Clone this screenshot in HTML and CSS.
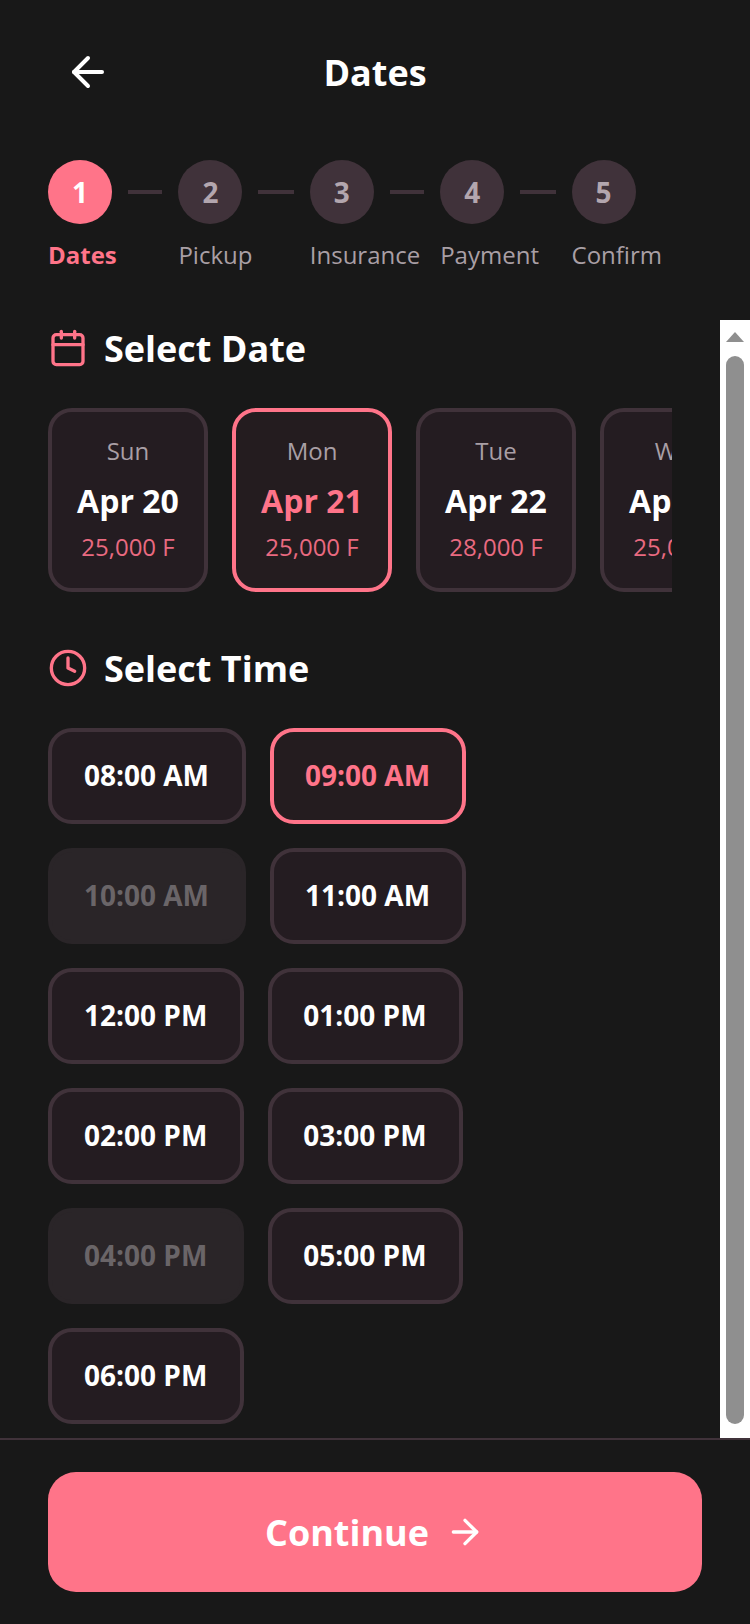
FILE: index.html
```html
<!DOCTYPE html>
<html lang="en">
<head>
<meta charset="utf-8">
<title>Dates</title>
<link rel="stylesheet" href="styles.css">
</head>
<body>
<div class="app">
  <header class="header">
    <button class="back" aria-label="Back">
      <svg class="icon-48" viewBox="0 0 24 24"><path d="M19 12H5"/><path d="M12 19l-7-7 7-7"/></svg>
    </button>
    <h1 class="title">Dates</h1>
  </header>

  <div class="steps">
    <div class="step">
      <div class="step-top"><span class="circle circle-active">1</span><span class="conn"></span></div>
      <span class="step-label step-label-active">Dates</span>
    </div>
    <div class="step step-wide">
      <div class="step-top"><span class="circle">2</span><span class="conn"></span></div>
      <span class="step-label">Pickup</span>
    </div>
    <div class="step">
      <div class="step-top"><span class="circle">3</span><span class="conn"></span></div>
      <span class="step-label">Insurance</span>
    </div>
    <div class="step step-wide">
      <div class="step-top"><span class="circle">4</span><span class="conn"></span></div>
      <span class="step-label">Payment</span>
    </div>
    <div class="step step-last">
      <div class="step-top"><span class="circle">5</span></div>
      <span class="step-label">Confirm</span>
    </div>
  </div>

  <div class="main">
    <div class="content">
      <section class="section">
        <h2 class="section-title">
          <svg class="icon-40 accent" viewBox="0 0 24 24"><path d="M8 2v4"/><path d="M16 2v4"/><rect x="3" y="4" width="18" height="18" rx="2"/><path d="M3 10h18"/></svg>
          Select Date
        </h2>
        <div class="dates">
          <div class="date-card"><span class="day">Sun</span><span class="date">Apr 20</span><span class="price">25,000 F</span></div>
          <div class="date-card date-card-on"><span class="day">Mon</span><span class="date">Apr 21</span><span class="price">25,000 F</span></div>
          <div class="date-card"><span class="day">Tue</span><span class="date">Apr 22</span><span class="price">28,000 F</span></div>
          <div class="date-card"><span class="day">Wed</span><span class="date">Apr 23</span><span class="price">25,000 F</span></div>
        </div>
      </section>

      <section class="section section-time">
        <h2 class="section-title section-title-time">
          <svg class="icon-40 accent" viewBox="0 0 24 24"><circle cx="12" cy="12" r="10"/><path d="M12 6v6l4 2"/></svg>
          Select Time
        </h2>
        <div class="times">
          <button class="time">08:00 AM</button>
          <button class="time time-on">09:00 AM</button>
          <button class="time time-off">10:00 AM</button>
          <button class="time">11:00 AM</button>
          <button class="time">12:00 PM</button>
          <button class="time">01:00 PM</button>
          <button class="time">02:00 PM</button>
          <button class="time">03:00 PM</button>
          <button class="time time-off">04:00 PM</button>
          <button class="time">05:00 PM</button>
          <button class="time">06:00 PM</button>
        </div>
      </section>
    </div>
    <div class="scrollbar">
      <span class="scroll-up"></span>
      <span class="scroll-thumb"></span>
    </div>
  </div>

  <footer class="footer">
    <button class="continue">
      Continue
      <svg class="icon-40" viewBox="0 0 24 24"><path d="M5 12h14"/><path d="M12 5l7 7-7 7"/></svg>
    </button>
  </footer>
</div>
</body>
</html>
```
FILE: styles.css
```css
* { box-sizing: border-box; }
html, body { margin: 0; padding: 0; background: #181818; }
body { font-family: "Open Sans", "Noto Sans", sans-serif; color: #fff; }
button { font-family: inherit; margin: 0; cursor: pointer; }

.app { width: 750px; height: 1624px; display: flex; flex-direction: column; overflow: hidden; }

svg { fill: none; stroke: currentColor; stroke-width: 2; stroke-linecap: round; stroke-linejoin: round; display: block; flex: none; }
.icon-48 { width: 48px; height: 48px; }
.icon-40 { width: 40px; height: 40px; }
.accent { color: #ff7489; }

.header { height: 144px; padding: 32px 48px 0; position: relative; display: flex; }
.back { width: 80px; height: 80px; padding: 0; border: 0; background: none; color: #fff; display: flex; align-items: center; justify-content: center; }
.title { position: absolute; left: 0; right: 0; top: 32px; margin: 0; text-align: center; font-size: 36px; line-height: 82px; font-weight: 700; }

.steps { display: flex; padding: 16px 48px 0; height: 176px; }
.step { width: 130.4px; display: flex; flex-direction: column; flex: none; }
.step-wide { width: 131.4px; }
.step-top { display: flex; align-items: center; }
.circle { width: 64px; height: 64px; padding-bottom: 1px; border-radius: 50%; background: #40323a; color: #b3a6ae; font-size: 28px; font-weight: 700; display: flex; align-items: center; justify-content: center; flex: none; }
.circle-active { background: #ff7489; color: #fff; }
.conn { flex: 1; height: 4px; margin: 0 16px; background: #40323a; }
.step-label { margin-top: 13px; font-size: 24px; line-height: 36px; color: #a99fa5; white-space: nowrap; }
.step-label-active { color: #ff7489; font-weight: 700; }

.main { flex: 1; display: flex; min-height: 0; }
.content { flex: 1; min-width: 0; padding: 0 48px; }
.section-title { margin: 0; height: 56px; display: flex; align-items: center; gap: 16px; font-size: 36px; font-weight: 700; }
.section-title-time { height: 58px; }
.section-time { margin-top: 47px; }

.dates { display: flex; gap: 24px; margin-top: 32px; overflow: hidden; }
.date-card { flex: none; width: 160px; height: 184px; padding-top: 21px; border: 4px solid #40323a; border-radius: 24px; background: #241c21; display: flex; flex-direction: column; align-items: center; }
.date-card-on { border-color: #ff7489; background: #241c1f; }
.day { font-size: 24px; line-height: 36px; color: #a99fa5; }
.date { font-size: 32px; line-height: 44px; font-weight: 700; margin: 10px 0 8px; }
.date-card-on .date { color: #ff7489; }
.price { font-size: 24px; line-height: 32px; color: #e96a80; }

.times { display: flex; flex-wrap: wrap; gap: 24px; margin-top: 31px; }
.time { height: 96px; padding: 0 32px 2px 31px; border: 4px solid #40323a; border-radius: 24px; background: #241c21; color: #fff; font-size: 28px; font-weight: 700; }
.time:nth-child(odd) { padding: 0 33px 2px 32px; }
.time-on { border-color: #ff7489; background: #241c1f; color: #ff7489; }
.time-off { border-color: #2a2528; background: #2a2528; color: #6a6568; }

.scrollbar { width: 30px; flex: none; background: #fff; display: flex; flex-direction: column; align-items: center; padding: 12px 0 14px; }
.scroll-up { width: 0; height: 0; border-left: 9px solid transparent; border-right: 9px solid transparent; border-bottom: 10px solid #8f8f8f; flex: none; }
.scroll-thumb { flex: 1; width: 18px; margin-top: 14px; border-radius: 9px; background: #8f8f8f; }

.footer { flex: none; height: 186px; border-top: 2px solid #40323a; padding: 32px 48px; }
.continue { width: 100%; height: 120px; border: 0; border-radius: 28px; background: #ff7489; color: #fff; font-size: 36px; font-weight: 700; display: flex; align-items: center; justify-content: center; gap: 16px; }
```
